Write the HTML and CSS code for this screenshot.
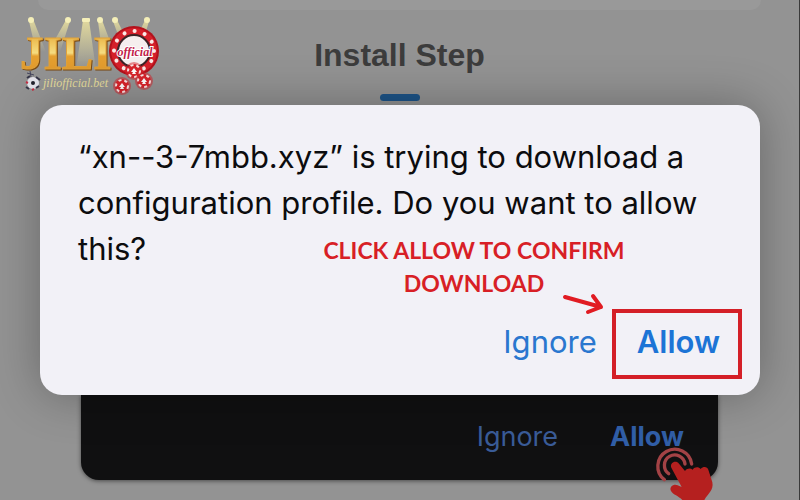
FILE: index.html
```html
<!DOCTYPE html>
<html lang="en">
<head>
    <meta charset="UTF-8">
    <meta name="viewport" content="width=device-width, initial-scale=1.0">
    <title>Install Step</title>
    <link rel="stylesheet" href="styles.css">
</head>
<body>
    <div class="page">
        <div class="top-panel"></div>

        <!-- logo -->
        <svg class="logo" viewBox="0 0 150 90" role="img" aria-label="JILI official">
            <defs>
                <linearGradient id="gold" x1="0" y1="0" x2="0" y2="1">
                    <stop offset="0" stop-color="#d99a2b"/>
                    <stop offset="0.3" stop-color="#efc45c"/>
                    <stop offset="0.5" stop-color="#f5dc80"/>
                    <stop offset="0.56" stop-color="#e5a030"/>
                    <stop offset="1" stop-color="#e0982a"/>
                </linearGradient>
                <linearGradient id="beam" x1="0" y1="0" x2="0" y2="1">
                    <stop offset="0" stop-color="#f6eba0" stop-opacity="0.8"/>
                    <stop offset="1" stop-color="#f6eba0" stop-opacity="0"/>
                </linearGradient>
                <g id="chip">
                    <circle r="9" fill="#d8232b" opacity="0.5"/>
                    <circle r="7" fill="#d8232b"/>
                    <circle r="6" fill="none" stroke="#fbe3e3" stroke-width="2" stroke-dasharray="3 3"/>
                    <path d="M0 -3 L3 1 L1 1 L2 3 L-2 3 L-1 1 L-3 1 Z" fill="#ffffff"/>
                </g>
            </defs>
            <g fill="url(#beam)">
                <path d="M19 11 L23 9 L36 42 L26 42 Z"/>
                <path d="M56 10 L60 11 L50 42 L38 42 Z"/>
                <path d="M73 10 L79 10 L86 60 L66 60 Z"/>
                <path d="M88 11 L92 10 L104 42 L92 42 Z"/>
                <path d="M103 11 L107 10 L120 36 L112 36 Z"/>
                <path d="M135 10 L139 11 L132 36 L124 34 Z"/>
            </g>
            <g fill="#f5efb8">
                <circle cx="21" cy="10" r="3"/>
                <circle cx="58" cy="10" r="3"/>
                <rect x="72" y="8" width="8" height="4" rx="1"/>
                <circle cx="90" cy="10" r="3"/>
                <circle cx="105" cy="10" r="3"/>
                <circle cx="137" cy="10" r="3"/>
            </g>
            <text class="logo-name" x="10" y="59" fill="url(#gold)">JILI</text>
            <circle cx="124" cy="41" r="25" fill="#b3121c"/>
            <circle cx="124" cy="41" r="23" fill="#d5202a"/>
            <circle cx="124" cy="41" r="20" fill="none" stroke="#fbe9e6" stroke-width="4" stroke-linecap="round" stroke-dasharray="0.1 10.37"/>
            <circle cx="124" cy="41" r="16" fill="#f5eeee" stroke="#3d2326" stroke-width="2"/>
            <text class="logo-tag" x="125" y="46">official</text>
            <use href="#chip" x="124" y="61"/>
            <use href="#chip" x="134" y="71"/>
            <use href="#chip" x="112" y="76"/>
            <circle cx="23" cy="73" r="6" fill="#e4e3ea"/>
            <circle cx="23" cy="73" r="2" fill="#22222c"/>
            <path d="M17 68 L20 66 M26 67 L30 70 M16 77 L19 79 M26 78 L29 76" stroke="#343447" stroke-width="2"/>
            <path d="M16 72 L18 73 M22 80 L24 79" stroke="#c22f43" stroke-width="2"/>
            <path d="M17 63 L24 65 M20 61 L21 67" stroke="#45455c"/>
            <text class="logo-site" x="33" y="77">jiliofficial.bet</text>
        </svg>

        <h1 class="title">Install Step</h1>
        <div class="title-bar"></div>

        <div class="dialog" role="dialog" aria-labelledby="message">
            <p class="message" id="message">“xn--3-7mbb.xyz” is trying to download a configuration profile. Do you want to allow this?</p>
            <div class="actions">
                <button type="button">Ignore</button>
                <button type="button" class="allow marked">Allow</button>
            </div>

            <div class="note">CLICK ALLOW TO CONFIRM DOWNLOAD</div>
            <svg class="arrow" viewBox="0 0 44 24" aria-hidden="true">
                <path d="M4 6 L40 16 M32 5 L40 16 L27 21" fill="none" stroke="#e11b22" stroke-width="4" stroke-linejoin="round" stroke-linecap="round"/>
            </svg>
        </div>

        <!-- previous step, behind the dialog -->
        <div class="dark-dialog">
            <div class="actions">
                <button type="button">Ignore</button>
                <button type="button" class="allow">Allow</button>
            </div>
            <svg class="tap" viewBox="0 0 240 180" aria-hidden="true">
                <g fill="none" stroke="#a34245" stroke-width="10" stroke-linecap="round">
                    <path d="M73 119 A51 51 0 1 1 155 72"/>
                    <path d="M86 101 A31 31 0 1 1 135 72"/>
                </g>
                <path d="M94 83 C88 68 108 58 117 71 L135 93 C141 84 152 84 158 89 C164 80 176 80 182 87 C190 78 202 80 205 89 L217 127 C222 150 203 162 193 180 L127 180 C116 168 99 164 93 153 C86 139 103 130 113 136 L125 141 Z" fill="#b5201f"/>
            </svg>
        </div>
    </div>
</body>
</html>
```

FILE: styles.css
```css
* {
    box-sizing: border-box;
}
body {
    margin: 0;
    font-family: Inter, "Liberation Sans", sans-serif;
    background-color: #939393;
}
.page {
    position: relative;
    min-height: 100vh;
    padding-bottom: 20px;
    overflow: hidden;
    border-right: 1px solid #3a3a3a;
}
.top-panel {
    height: 10px;
    margin: 0 38px;
    background-color: #999999;
    border-radius: 0 0 16px 16px;
}

/* logo */
.logo {
    position: absolute;
    left: 10px;
    top: 10px;
    width: 150px;
    height: 90px;
}
.logo-name {
    font: bold 47px "Liberation Serif", serif;
    stroke: #e0a23a;
    stroke-width: 1px;
    filter: drop-shadow(1px 1px 0 #7a4a12);
}
.logo-tag {
    font: italic bold 12px "Liberation Serif", serif;
    fill: #c2204a;
    stroke: #ffffff;
    stroke-width: 2px;
    paint-order: stroke;
    text-anchor: middle;
}
.logo-site {
    font: italic 12px "Liberation Serif", serif;
    fill: #e6dd9c;
}

.title {
    margin: 24px 0 0;
    font-family: "Liberation Sans", Arial, sans-serif;
    font-size: 32px;
    line-height: 42px;
    text-align: center;
    color: #3c3c3c;
}
.title-bar {
    width: 40px;
    height: 7px;
    margin: 18px auto 4px;
    border-radius: 4px;
    background-color: #1d5488;
}

/* white dialog */
.dialog {
    position: relative;
    z-index: 1;
    margin: 0 39px 0 40px;
    padding: 29px 40px 16px 38px;
    border-radius: 22px;
    background-color: #f2f1f7;
    box-shadow: 0 0 48px rgba(0, 0, 0, 0.3);
}
.message {
    margin: 0;
    font-size: 31px;
    line-height: 46px;
    color: #0c0c0e;
}
.actions {
    display: flex;
    justify-content: flex-end;
    gap: 40px;
}
.dialog .actions {
    margin-top: 37px;
}
button {
    padding: 0;
    border: none;
    background: none;
    font-family: inherit;
    font-size: 31px;
    line-height: 70px;
    color: #2a77cf;
    cursor: pointer;
}
.dialog button {
    padding-bottom: 4px;
    line-height: 66px;
}
.allow {
    font-weight: 600;
}
.marked {
    position: relative;
    color: #1c74d6;
}
.marked::after {
    content: "";
    position: absolute;
    inset: 0 -22px 0 -25px;
    border: 4px solid #d41f27;
}

/* red hint */
.note {
    position: absolute;
    right: 121px;
    top: 129px;
    width: 330px;
    font-family: Lato, sans-serif;
    font-size: 23px;
    font-weight: 700;
    line-height: 33px;
    text-align: center;
    color: #d81f26;
}
.arrow {
    position: absolute;
    right: 155px;
    top: 186px;
    width: 44px;
    height: 24px;
}

/* dark dialog */
.dark-dialog {
    position: relative;
    margin: 0 81px;
    padding: 17px 34px 18px;
    border-radius: 0 0 18px 18px;
    background-color: #101011;
    box-shadow: 0 1px 4px rgba(0, 0, 0, 0.5);
}
.dark-dialog .actions {
    gap: 52px;
}
.dark-dialog button {
    font-size: 27px;
    line-height: 50px;
    color: #3a5c98;
}
.dark-dialog .allow {
    font-weight: 700;
    color: #315fa8;
}
.tap {
    position: absolute;
    right: -2px;
    bottom: -20px;
    width: 80px;
    height: 60px;
}
```
